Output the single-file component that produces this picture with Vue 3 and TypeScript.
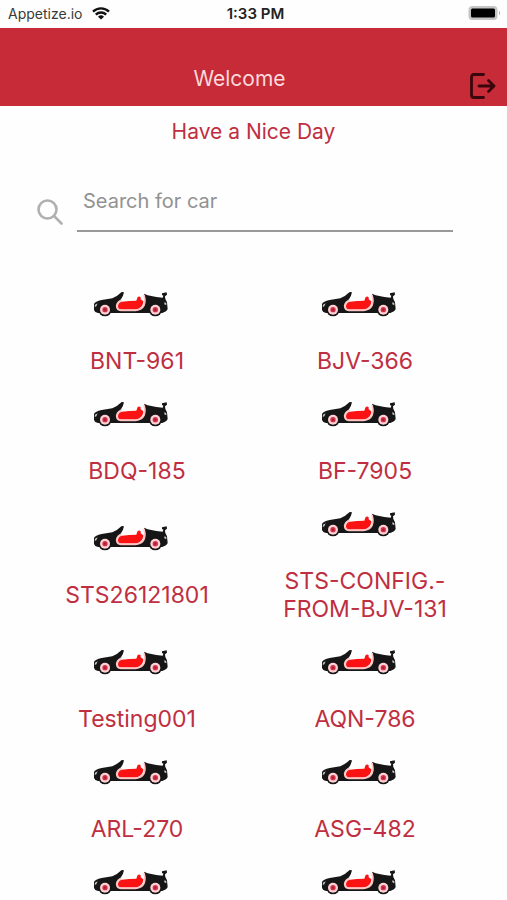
<script setup lang="ts">
import { ref } from 'vue'

interface Car {
  id: number
  label: string
}

const query = ref('')

const cars: Car[] = [
  'BNT-961',
  'BJV-366',
  'BDQ-185',
  'BF-7905',
  'STS26121801',
  'STS-CONFIG.-FROM-BJV-131',
  'Testing001',
  'AQN-786',
  'ARL-270',
  'ASG-482',
  '',
  '',
].map((label, id) => ({ id, label }))
</script>

<template>
  <div class="screen">
    <div class="status">
      <div class="carrier">
        <span>Appetize.io</span>
        <svg class="wifi" viewBox="0 0 18 13" aria-hidden="true">
          <path d="M1 4.6a11.5 11.5 0 0 1 16 0" />
          <path d="M3.8 7.6a7.5 7.5 0 0 1 10.4 0" />
          <path class="dot" d="M9 12.6 6 9.7a4.3 4.3 0 0 1 6 0z" />
        </svg>
      </div>
      <span class="clock">1:33 PM</span>
      <svg class="battery" viewBox="0 0 33 16" aria-hidden="true">
        <rect x="0.5" y="1" width="29" height="14" rx="4" fill="#c4c4c4" />
        <rect x="3" y="3.5" width="24" height="9" rx="1.5" fill="#000" />
        <path d="M31 5.5q2 2.5 0 5z" fill="#aaa" />
      </svg>
    </div>

    <header class="bar">
      <h1>Welcome</h1>
      <button class="logout" type="button" aria-label="Log out">
        <svg viewBox="0 0 26 26" aria-hidden="true">
          <path d="M13.500 1.500H4Q1.500 1.500 1.500 4v18q0 2.500 2.500 2.500h9.500M9 13h15M18.500 7.500 24 13l-5.500 5.500" />
        </svg>
      </button>
    </header>

    <main>
      <p class="greeting">Have a Nice Day</p>

      <form class="search" @submit.prevent>
        <label for="car-search" aria-label="Search for car">
          <svg viewBox="0 0 26 26" aria-hidden="true">
            <circle cx="10.500" cy="10.500" r="9" />
            <path d="m17 17 7.500 7.500" />
          </svg>
        </label>
        <input id="car-search" v-model="query" type="text" placeholder="Search for car" />
      </form>

      <ul class="cars">
        <li v-for="car in cars" :key="car.id">
          <svg class="car" viewBox="0 0 228 84" aria-hidden="true">
            <path
              fill="#161616"
              d="M3 39Q6 31 26 27L58 22Q74 15 86 3L93 4Q91 15 84 25L76 32Q68 42 74 52L84 60H126Q148 56 156 40 159 24 153 8L164 13 190 18 209 20 211 14 207 12 207 7 221 4 222 11 216 16 217 24 222 34 224 54Q222 61 208 66H15Q5 64 3 57Z"
            />
            <path
              fill="none"
              stroke="#ffc4c4"
              stroke-width="5"
              d="M86 28Q73 32 71 44 71 57 84 58H128Q147 56 153 43 158 30 153 12"
            />
            <path
              fill="#fb1212"
              d="M87 32 108 30 130 29 134 18Q139 14 143 19V25L151 31Q151 44 141 50 134 55 126 55H84Q74 53 75 44 77 34 87 32Z"
            />
            <path fill="#c9c9c9" d="m6 41 8-4-4 9-5 2zM214 34l6 2v7l-6-3z" />
            <g v-for="cx in [36, 187]" :key="cx">
              <circle :cx="cx" cy="56" r="20" fill="#161616" />
              <circle :cx="cx" cy="56" r="15" fill="#ffd0d4" />
              <circle :cx="cx" cy="56" r="8" fill="#d03048" />
              <circle :cx="cx" cy="56" r="3" fill="#a01c32" />
            </g>
          </svg>
          <a v-if="car.label" href="#">{{ car.label }}</a>
        </li>
      </ul>
    </main>
  </div>
</template>

<style>
body {
  margin: 0;
  background: #fefefe;
}
</style>

<style scoped>
.screen {
  min-height: 100vh;
  background: #fefefe;
  font-family: Inter, "Liberation Sans", sans-serif;
  color: #bf2f41;
}

.status {
  display: grid;
  grid-template-columns: 1fr auto 1fr;
  align-items: center;
  height: 28px;
  padding: 0 4px 2px 8px;
  box-sizing: border-box;
  font-size: 14px;
  color: #3a3a3a;
}

.carrier {
  display: flex;
  align-items: center;
  gap: 10px;
}

.wifi {
  width: 18px;
  height: 13px;
  fill: none;
  stroke: #111;
  stroke-width: 2.4;
}

.wifi .dot {
  fill: #111;
  stroke: none;
}

.clock {
  font-size: 15px;
  font-weight: 600;
  color: #222;
}

.battery {
  justify-self: end;
  width: 33px;
  height: 16px;
  padding-right: 2px;
}

.bar {
  display: flex;
  align-items: flex-end;
  height: 78px;
  padding: 0 10px 6px;
  box-sizing: border-box;
  background: #c62b37;
}

h1 {
  flex: 1;
  margin: 0 0 7px;
  font-size: 21px;
  font-weight: 400;
  line-height: 28px;
  text-align: center;
  color: #fbd9dc;
}

.logout {
  width: 28px;
  height: 28px;
  padding: 1px;
  border: 0;
  background: none;
}

.logout svg {
  display: block;
  width: 26px;
  height: 26px;
  fill: none;
  stroke: #38060b;
  stroke-width: 2.8;
  stroke-linecap: round;
  stroke-linejoin: round;
}

.greeting {
  margin: 12px 0 0;
  font-size: 21px;
  line-height: 28px;
  text-align: center;
}

.search {
  display: flex;
  gap: 14px;
  margin: 36px 54px 0 37px;
}

.search label {
  padding-top: 17px;
}

.search svg {
  display: block;
  width: 26px;
  height: 26px;
  fill: none;
  stroke: #b0b0b0;
  stroke-width: 2.6;
  stroke-linecap: round;
}

.search input {
  flex: 1;
  min-width: 0;
  height: 50px;
  padding: 0 6px 10px;
  box-sizing: border-box;
  border: 0;
  border-bottom: 2px solid #999;
  border-radius: 0;
  outline: 0;
  background: none;
  font: inherit;
  font-size: 20px;
  color: #444;
}

.search input::placeholder {
  color: #929292;
  opacity: 1;
}

.cars {
  display: grid;
  grid-template-columns: 1fr 1fr;
  margin: 47px 28px 0 23px;
  padding: 0;
  list-style: none;
}

.cars li {
  display: flex;
  flex-direction: column;
  align-items: center;
  justify-content: center;
  padding: 12px 24px 14px;
}

.cars li:nth-last-child(-n + 2) {
  padding-bottom: 0;
}

.car {
  display: block;
  width: 76px;
  height: 28px;
  margin-right: 12px;
}

.cars a {
  margin-top: 28px;
  font-size: 23px;
  line-height: 28px;
  text-align: center;
  text-decoration: none;
  color: inherit;
}
</style>
